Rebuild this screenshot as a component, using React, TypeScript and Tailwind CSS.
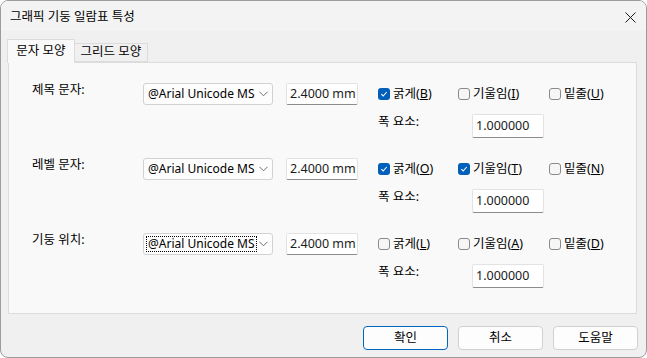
import React from 'react';

const FONT = '"Noto Sans", "Noto Sans CJK KR", sans-serif';

type Check = { label: string; key: string; checked: boolean; width: string };

const groups: { title: string; checks: Check[]; focus?: boolean }[] = [
  {
    title: '제목 문자:',
    checks: [
      { label: '굵게', key: 'B', checked: true, width: 'w-[80px]' },
      { label: '기울임', key: 'I', checked: false, width: 'w-[91px]' },
      { label: '밑줄', key: 'U', checked: false, width: 'w-[80px]' },
    ],
  },
  {
    title: '레벨 문자:',
    checks: [
      { label: '굵게', key: 'O', checked: true, width: 'w-[80px]' },
      { label: '기울임', key: 'T', checked: true, width: 'w-[91px]' },
      { label: '밑줄', key: 'N', checked: false, width: 'w-[80px]' },
    ],
  },
  {
    title: '기둥 위치:',
    focus: true,
    checks: [
      { label: '굵게', key: 'L', checked: false, width: 'w-[80px]' },
      { label: '기울임', key: 'A', checked: false, width: 'w-[91px]' },
      { label: '밑줄', key: 'D', checked: false, width: 'w-[80px]' },
    ],
  },
];

function CheckBox({ checked }: { checked: boolean }) {
  if (checked) {
    return (
      <div className="w-[12px] h-[12px] rounded-[3px] bg-[#005fb8] flex items-center justify-center shrink-0">
        <svg width="8" height="8" viewBox="0 0 8 8">
          <polyline points="1.3,4.2 3.2,6 6.7,2" fill="none" stroke="white" strokeWidth="1.1" />
        </svg>
      </div>
    );
  }
  return <div className="w-[12px] h-[12px] rounded-[3px] border border-[#8a8a8a] bg-[#f6f6f6] shrink-0" />;
}

function ComboBox({ focus }: { focus?: boolean }) {
  return (
    <div className="w-[130px] h-[22px] rounded-[3px] border border-[#d2d2d2] bg-[#fdfdfd] flex items-center pl-[2px] pr-[4px]">
      <span
        className={`text-[12px] leading-[16px] px-[2px] whitespace-nowrap ${focus ? 'outline outline-1 outline-dotted outline-black -outline-offset-1' : ''}`}
      >
        @Arial Unicode MS
      </span>
      <svg className="ml-auto shrink-0" width="9" height="6" viewBox="0 0 9 6">
        <polyline points="0.5,0.8 4.5,4.8 8.5,0.8" fill="none" stroke="#5f5f5f" strokeWidth="0.9" />
      </svg>
    </div>
  );
}

function TextBox({ value, h }: { value: string; h: string }) {
  return (
    <div
      className={`w-[72px] ${h} bg-white border border-[#e3e3e3] border-b-[#8c8c8c] rounded-[2px] flex items-center pl-[3px] text-[#1b1b1b] whitespace-nowrap`}
    >
      {value}
    </div>
  );
}

export default function App() {
  return (
    <div
      className="w-[647px] h-[358px] rounded-[8px] border border-[#9c9c9c] bg-[#f0f0f0] flex flex-col overflow-hidden text-[12.5px] text-black"
      style={{ fontFamily: FONT }}
    >
      {/* Title bar */}
      <div className="h-[30px] flex items-center pl-[9px] pr-[10px] pt-[2px] bg-[#f3f3f3]">
        <span>그래픽 기둥 일람표 특성</span>
        <svg className="ml-auto" width="11" height="11" viewBox="0 0 11 11">
          <path d="M0.5 0.5 L10.5 10.5 M10.5 0.5 L0.5 10.5" stroke="#1a1a1a" strokeWidth="1" />
        </svg>
      </div>

      {/* Tabs */}
      <div className="mt-[8px] ml-[6px] flex items-end h-[23px] relative z-10">
        <div className="w-[68px] h-[24px] -mb-px bg-[#f9f9f9] border border-b-0 border-[#dcdcdc] flex items-center justify-center pb-[1px]">
          문자 모양
        </div>
        <div className="w-[73px] h-[19px] bg-[#f0f0f0] border border-l-0 border-[#dcdcdc] flex items-center justify-center">
          그리드 모양
        </div>
      </div>

      {/* Panel */}
      <div className="ml-[7px] w-[629px] h-[252px] bg-[#f9f9f9] border border-[#dcdcdc] pt-[20px] pl-[23px] flex flex-col gap-[20px]">
        {groups.map((g) => (
          <div key={g.title} className="flex flex-col gap-[9px]">
            <div className="flex items-center h-[22px]">
              <div className="w-[111px] self-start leading-[14px]">{g.title}</div>
              <ComboBox focus={g.focus} />
              <div className="ml-[13px]">
                <TextBox value="2.4000 mm" h="h-[22px]" />
              </div>
              <div className="ml-[20px] flex items-center">
                {g.checks.map((c) => (
                  <div key={c.key} className={`${c.width} flex items-center gap-[3px]`}>
                    <CheckBox checked={c.checked} />
                    <span className="leading-[16px]">
                      {c.label}(<u>{c.key}</u>)
                    </span>
                  </div>
                ))}
              </div>
            </div>
            <div className="flex items-center h-[24px] pl-[346px]">
              <div className="w-[94px] self-start leading-[16px]">폭 요소:</div>
              <TextBox value="1.000000" h="h-[24px]" />
            </div>
          </div>
        ))}
      </div>

      {/* Buttons */}
      <div className="mt-[12px] mr-[8px] flex justify-end gap-[10px]">
        <button className="w-[85px] h-[24px] rounded-[4px] border border-[#0067c0] bg-[#fdfdfd] flex items-center justify-center">
          확인
        </button>
        <button className="w-[85px] h-[24px] rounded-[4px] border border-[#d0d0d0] bg-[#fdfdfd] flex items-center justify-center">
          취소
        </button>
        <button className="w-[85px] h-[24px] rounded-[4px] border border-[#d0d0d0] bg-[#fdfdfd] flex items-center justify-center">
          도움말
        </button>
      </div>
    </div>
  );
}
